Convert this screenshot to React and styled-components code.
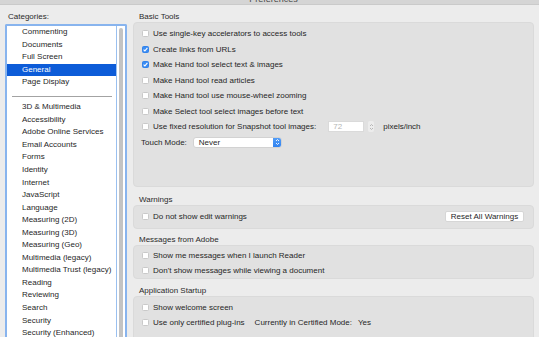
import React from "react";
import styled, { createGlobalStyle } from "styled-components";

const Global = createGlobalStyle`
  html, body { margin: 0; padding: 0; }
  body {
    background: #ececec;
    font-family: "Liberation Sans", Arial, sans-serif;
    font-size: 8px;
    color: #262626;
    width: 539px;
    height: 337px;
    overflow: hidden;
  }
`;

const Window = styled.div`
  width: 539px;
  height: 337px;
  display: flex;
  flex-direction: column;
  overflow: hidden;
`;

const TitleBar = styled.div`
  height: 4px;
  flex: none;
  background: #d5d5d5;
  border-bottom: 1px solid #cacaca;
  display: flex;
  justify-content: center;
  overflow: hidden;
`;

const TitleText = styled.div`
  font-size: 9px;
  line-height: 9px;
  margin-top: -5px;
  margin-left: 8px;
  color: #4a4a4a;
`;

const Body = styled.div`
  flex: 1;
  display: flex;
  gap: 6px;
  padding: 0 5px;
  min-height: 0;
`;

const Sidebar = styled.div`
  width: 122px;
  flex: none;
  padding-top: 7px;
  display: flex;
  flex-direction: column;
`;

const SideLabel = styled.div`
  line-height: 10px;
  height: 10px;
  margin-bottom: 2px;
  padding-left: 3px;
  color: #2a2a2a;
`;

const ListBox = styled.div`
  flex: 1;
  display: flex;
  background: #fff;
  border: 2px solid #88b4ee;
  border-bottom: none;
  border-radius: 2px 2px 0 0;
  overflow: hidden;
`;

const List = styled.div`
  width: 109px;
  flex: none;
  border-right: 1px solid #9ac0ef;
`;

const Item = styled.div`
  height: 12.56px;
  line-height: 12.56px;
  padding-left: 15px;
  white-space: nowrap;
  color: ${(p) => (p.$selected ? "#ffffff" : "#1f1f1f")};
  background: ${(p) => (p.$selected ? "#0d5cd8" : "transparent")};
`;

const SepRow = styled.div`
  height: 12.56px;
  padding: 3px 4px 0 5px;
  display: flex;
  align-items: center;
  box-sizing: border-box;
`;

const SepLine = styled.div`
  flex: 1;
  height: 1px;
  background: #a3a3a3;
`;

const ScrollTrack = styled.div`
  flex: 1;
  padding: 2px 2px 0 2px;
  display: flex;
  justify-content: center;
`;

const Thumb = styled.div`
  width: 4px;
  height: 400px;
  border-radius: 2px;
  background: #c3c3c3;
`;

const Main = styled.div`
  width: 401px;
  flex: none;
  padding-top: 7px;
  display: flex;
  flex-direction: column;
`;

const Group = styled.div`
  display: flex;
  flex-direction: column;
  margin-bottom: ${(p) => p.$mb ?? 7}px;
`;

const GroupLabel = styled.div`
  height: 9px;
  line-height: 9px;
  padding-left: 6px;
  margin-bottom: 1px;
  color: #2a2a2a;
`;

const Panel = styled.div`
  box-sizing: border-box;
  height: ${(p) => p.$h}px;
  background: #e1e1e1;
  border: 1px solid #dadada;
  border-radius: 4px;
  padding: 3px 8px 0 8px;
  display: flex;
  flex-direction: column;
`;

const Row = styled.div`
  height: 15.5px;
  display: flex;
  align-items: center;
  white-space: nowrap;
  color: #262626;
`;

const Box = styled.span`
  width: 7px;
  height: 7px;
  flex: none;
  box-sizing: border-box;
  border-radius: 1.5px;
  margin-right: 4px;
  display: flex;
  align-items: center;
  justify-content: center;
  background: ${(p) => (p.$checked ? "#3a8cf3" : "#ffffff")};
  border: 1px solid ${(p) => (p.$checked ? "#3383ea" : "#c9c9c9")};
`;

const FieldLabel = styled.span`
  margin-left: -1px;
`;

const SelectBox = styled.div`
  margin-left: 6px;
  width: 89px;
  height: 11px;
  box-sizing: border-box;
  background: #fff;
  border: 1px solid #d2d2d2;
  border-radius: 3px;
  display: flex;
  align-items: center;
  overflow: hidden;
`;

const SelectText = styled.span`
  flex: 1;
  padding-left: 5px;
  line-height: 9px;
`;

const SelectStepper = styled.span`
  width: 9px;
  height: 11px;
  margin-right: -1px;
  background: linear-gradient(#57a0f7, #2c7ff0);
  border-radius: 0 3px 3px 0;
  display: flex;
  align-items: center;
  justify-content: center;
`;

const NumInput = styled.div`
  margin-left: 12px;
  width: 36px;
  height: 11px;
  box-sizing: border-box;
  background: #fff;
  border: 1px solid #dadada;
  padding-left: 4px;
  line-height: 9px;
  color: #b5b5b5;
`;

const SmallStepper = styled.span`
  margin-left: 4px;
  width: 6px;
  height: 11px;
  display: flex;
  align-items: center;
  justify-content: center;
  background: #ececec;
  border-radius: 2px;
`;

const Unit = styled.span`
  margin-left: 9px;
`;

const Button = styled.div`
  margin-left: auto;
  margin-right: 1px;
  width: 79px;
  height: 11px;
  box-sizing: border-box;
  background: #fff;
  border: 1px solid #d6d6d6;
  border-radius: 2px;
  display: flex;
  align-items: center;
  justify-content: center;
  color: #1f1f1f;
`;

const Extra = styled.span`
  margin-left: ${(p) => p.$ml}px;
`;

const Check = ({ checked }) => (
  <Box $checked={checked}>
    {checked && (
      <svg width="5" height="5" viewBox="0 0 5 5">
        <path d="M0.6 2.6 L1.9 3.9 L4.4 0.9" fill="none" stroke="#fff" strokeWidth="1.1" />
      </svg>
    )}
  </Box>
);

const Arrows = ({ color }) => (
  <svg width="5" height="8" viewBox="0 0 5 8">
    <path d="M1 3 L2.5 1.5 L4 3 M1 5 L2.5 6.5 L4 5" fill="none" stroke={color} strokeWidth="0.9" />
  </svg>
);

const CheckRow = ({ checked, children }) => (
  <Row>
    <Check checked={checked} />
    <span>{children}</span>
  </Row>
);

const categoriesTop = ["Commenting", "Documents", "Full Screen", "General", "Page Display"];
const categoriesRest = [
  "3D & Multimedia",
  "Accessibility",
  "Adobe Online Services",
  "Email Accounts",
  "Forms",
  "Identity",
  "Internet",
  "JavaScript",
  "Language",
  "Measuring (2D)",
  "Measuring (3D)",
  "Measuring (Geo)",
  "Multimedia (legacy)",
  "Multimedia Trust (legacy)",
  "Reading",
  "Reviewing",
  "Search",
  "Security",
  "Security (Enhanced)",
];

export default function App() {
  return (
    <Window>
      <Global />
      <TitleBar>
        <TitleText>Preferences</TitleText>
      </TitleBar>
      <Body>
        <Sidebar>
          <SideLabel>Categories:</SideLabel>
          <ListBox>
            <List>
              {categoriesTop.map((c) => (
                <Item key={c} $selected={c === "General"}>
                  {c}
                </Item>
              ))}
              <SepRow>
                <SepLine />
              </SepRow>
              {categoriesRest.map((c) => (
                <Item key={c}>{c}</Item>
              ))}
            </List>
            <ScrollTrack>
              <Thumb />
            </ScrollTrack>
          </ListBox>
        </Sidebar>
        <Main>
          <Group $mb={8}>
            <GroupLabel>Basic Tools</GroupLabel>
            <Panel $h={165}>
              <CheckRow>Use single-key accelerators to access tools</CheckRow>
              <CheckRow checked>Create links from URLs</CheckRow>
              <CheckRow checked>Make Hand tool select text &amp; images</CheckRow>
              <CheckRow>Make Hand tool read articles</CheckRow>
              <CheckRow>Make Hand tool use mouse-wheel zooming</CheckRow>
              <CheckRow>Make Select tool select images before text</CheckRow>
              <Row>
                <Check />
                <span>Use fixed resolution for Snapshot tool images:</span>
                <NumInput>72</NumInput>
                <SmallStepper>
                  <Arrows color="#b0b0b0" />
                </SmallStepper>
                <Unit>pixels/inch</Unit>
              </Row>
              <Row>
                <FieldLabel>Touch Mode:</FieldLabel>
                <SelectBox>
                  <SelectText>Never</SelectText>
                  <SelectStepper>
                    <Arrows color="#ffffff" />
                  </SelectStepper>
                </SelectBox>
              </Row>
            </Panel>
          </Group>
          <Group $mb={6}>
            <GroupLabel>Warnings</GroupLabel>
            <Panel $h={23.5}>
              <Row>
                <Check />
                <span>Do not show edit warnings</span>
                <Button>Reset All Warnings</Button>
              </Row>
            </Panel>
          </Group>
          <Group>
            <GroupLabel>Messages from Adobe</GroupLabel>
            <Panel $h={34}>
              <CheckRow>Show me messages when I launch Reader</CheckRow>
              <CheckRow>Don't show messages while viewing a document</CheckRow>
            </Panel>
          </Group>
          <Group>
            <GroupLabel>Application Startup</GroupLabel>
            <Panel $h={60}>
              <CheckRow>Show welcome screen</CheckRow>
              <Row>
                <Check />
                <span>Use only certified plug-ins</span>
                <Extra $ml={10}>Currently in Certified Mode:</Extra>
                <Extra $ml={6}>Yes</Extra>
              </Row>
            </Panel>
          </Group>
        </Main>
      </Body>
    </Window>
  );
}
